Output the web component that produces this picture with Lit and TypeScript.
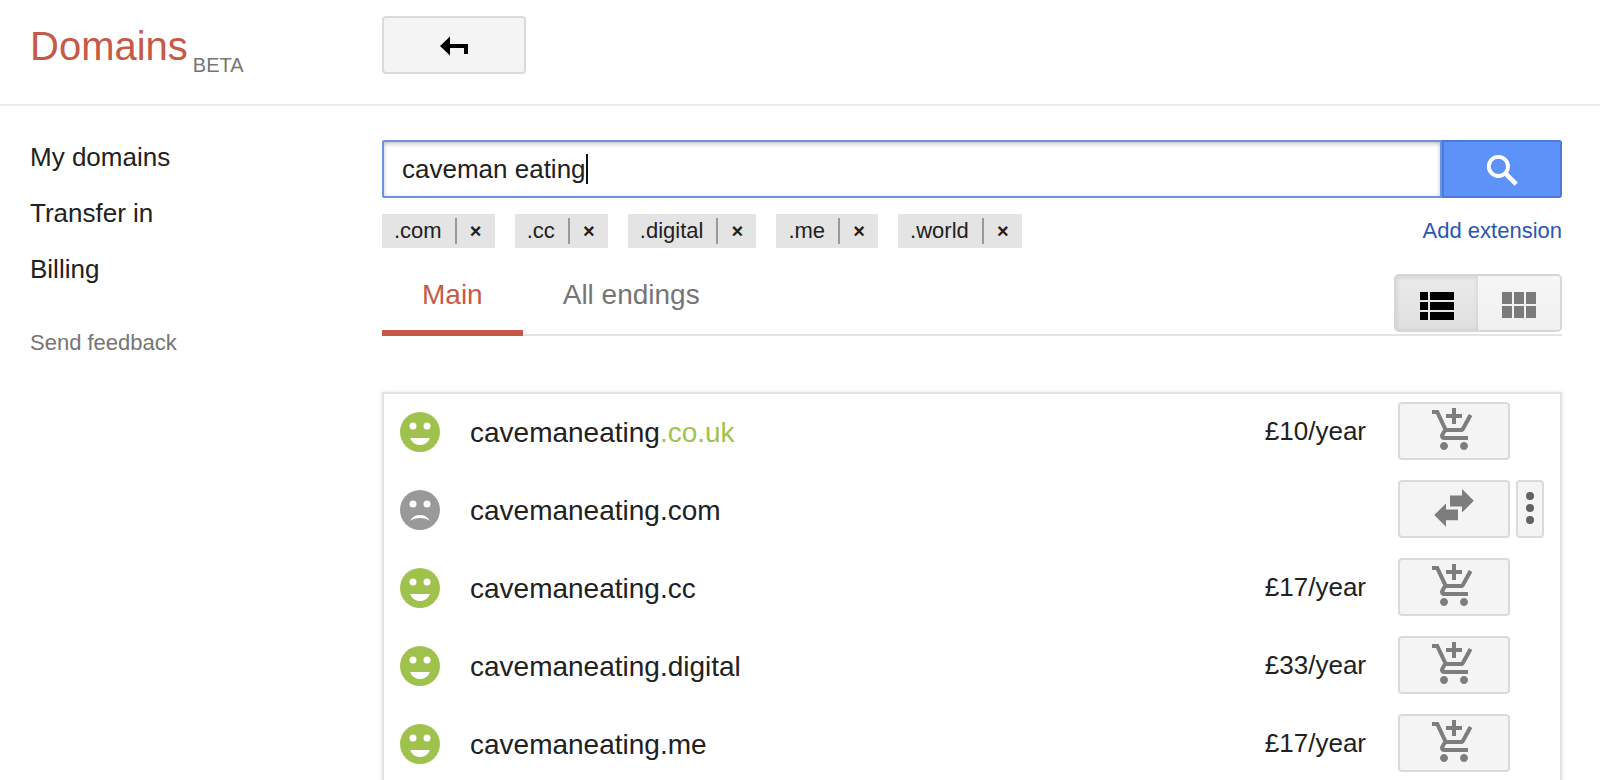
import { LitElement, html, svg, css, nothing } from "lit";
import { customElement, property, state, query } from "lit/decorators.js";
import { classMap } from "lit/directives/class-map.js";
import { styleMap } from "lit/directives/style-map.js";

interface Result {
  name: string;
  ending: string;
  price?: string;
  featured?: boolean;
}

const RESULTS: Result[] = [
  { name: "cavemaneating", ending: ".co.uk", price: "£10/year", featured: true },
  { name: "cavemaneating", ending: ".com" },
  { name: "cavemaneating", ending: ".cc", price: "£17/year" },
  { name: "cavemaneating", ending: ".digital", price: "£33/year" },
  { name: "cavemaneating", ending: ".me", price: "£17/year" },
];

const backIcon = html`<svg width="28" height="20" viewBox="0 0 28 20" aria-hidden="true">
  <path d="M0 10 10 0.5V8H28V18H24V12H10V19.5z" fill="#000" />
</svg>`;

const searchIcon = html`<svg width="36" height="36" viewBox="0 0 36 36" fill="none" stroke="#fff" aria-hidden="true">
  <circle cx="14.4" cy="15.4" r="9.6" stroke-width="3.8" />
  <path d="M21 22 32.2 33.2" stroke-width="4.6" />
</svg>`;

const listIcon = html`<svg width="34" height="28" viewBox="0 0 34 28" aria-hidden="true">
  ${[0, 10, 20].map((y) => svg`<path d="M0 ${y}h8v8h-8zM10 ${y}h24v8h-24z" fill="#000" />`)}
</svg>`;

const gridIcon = html`<svg width="34" height="28" viewBox="0 0 34 28" aria-hidden="true">
  ${[0, 14].map((y) => [0, 12, 24].map((x) => svg`<rect x=${x} y=${y} width="10" height="12" fill="#7b7b7b" />`))}
</svg>`;

const cartIcon = html`<svg width="48" height="48" viewBox="0 0 24 24" fill="#7d7d7d" aria-hidden="true">
  <path
    d="M11 9h2V6h3V4h-3V1h-2v3H8v2h3v3zm-4 9c-1.1 0-1.99.9-1.99 2S5.9 22 7 22s2-.9 2-2-.9-2-2-2zm10 0c-1.1 0-1.99.9-1.99 2s.89 2 1.99 2 2-.9 2-2-.9-2-2-2zm-9.83-3.25l.03-.12.9-1.63h7.45c.75 0 1.41-.41 1.75-1.03l3.86-7.01L19.42 4h-.01l-1.1 2-2.76 5H8.53l-.13-.27L6.16 6l-.95-2-.94-2H1v2h2l3.6 7.59-1.35 2.45c-.16.28-.25.61-.25.96 0 1.1.9 2 2 2h12v-2H7.42c-.13 0-.25-.11-.25-.25z"
  />
</svg>`;

const transferIcon = html`<svg width="48" height="48" viewBox="0 0 48 48" fill="#7d7d7d" aria-hidden="true">
  <path d="M20 11.4H32V5L43.8 16.8 32 28.6V22.4H20z" />
  <path d="M28 25.4H16V19.4L4.2 31 16 42.8V36.2H28z" />
</svg>`;

const moreIcon = html`<svg width="8" height="34" viewBox="0 0 8 34" fill="#636363" aria-hidden="true">
  <circle cx="4" cy="5" r="4" /><circle cx="4" cy="17" r="4" /><circle cx="4" cy="29" r="4" />
</svg>`;

const face = (happy: boolean) => html`<svg
  class="face"
  width="40"
  height="40"
  viewBox="0 0 40 40"
  role="img"
  aria-label=${happy ? "Available" : "Unavailable"}
>
  <circle cx="20" cy="20" r="20" fill=${happy ? "#9fc24d" : "#999"} />
  <circle cx="13" cy="14" r="3.5" fill="#fff" />
  <circle cx="27" cy="14" r="3.5" fill="#fff" />
  ${happy
    ? svg`<path d="M10 26H30C28 30.6 24.6 33 20 33S12 30.6 10 26z" fill="#fff" />`
    : svg`<path d="M10 31C12.4 26.8 16 25 20 25S27.6 26.8 30 31C27 28.8 23.6 28 20 28S13 28.8 10 31z" fill="#fff" />`}
</svg>`;

@customElement("result-row")
class ResultRow extends LitElement {
  @property({ attribute: false }) result!: Result;

  static styles = css`
    :host {
      display: flex;
      align-items: center;
      padding: 8px 16px 12px;
    }
    .face {
      padding-top: 2px;
    }
    .name {
      flex: 1;
      margin-left: 30px;
      padding-top: 4px;
      font-size: 28px;
      line-height: 34px;
    }
    .featured {
      color: #9fc24d;
    }
    .price {
      font-size: 26px;
      line-height: 30px;
    }
    .action,
    .more {
      display: flex;
      align-items: center;
      justify-content: center;
      box-sizing: border-box;
      height: 58px;
      padding: 0 0 2px;
      border: 2px solid #dadada;
      border-radius: 4px;
      background: #f4f4f4;
      cursor: pointer;
    }
    .action {
      width: 112px;
      margin-left: 32px;
    }
    .side {
      display: flex;
      width: 28px;
      margin-left: 6px;
    }
    .more {
      width: 28px;
    }
  `;

  render() {
    const { name, ending, price, featured } = this.result;
    return html`
      ${face(!!price)}
      <span class="name">${name}<span class=${classMap({ featured: !!featured })}>${ending}</span></span>
      ${price ? html`<span class="price">${price}</span>` : nothing}
      <button class="action" aria-label=${price ? "Add to cart" : "Transfer in"}>
        ${price ? cartIcon : transferIcon}
      </button>
      <span class="side">
        ${price ? nothing : html`<button class="more" aria-label="More options">${moreIcon}</button>`}
      </span>
    `;
  }
}

@customElement("app-root")
class AppRoot extends LitElement {
  @state() private term = "caveman eating";
  @state() private caret = 0;
  @state() private endings = [".com", ".cc", ".digital", ".me", ".world"];
  @state() private tab = "Main";
  @query(".field") private field!: HTMLInputElement;

  static styles = css`
    :host {
      display: block;
      height: 100vh;
      overflow-y: auto;
      scrollbar-width: none;
      background: #fff;
      color: #212121;
      font-family: "Liberation Sans", Arial, sans-serif;
    }
    button,
    input {
      font-family: inherit;
      color: inherit;
    }
    button {
      padding: 0;
      cursor: pointer;
    }
    a {
      color: inherit;
      text-decoration: none;
    }
    .top,
    .body {
      display: grid;
      grid-template-columns: 382px minmax(0, 1fr);
    }
    .top {
      padding: 16px 0 28px;
      border-bottom: 2px solid #ebebeb;
    }
    .brand {
      display: flex;
      align-items: flex-end;
      gap: 5px;
      padding-left: 30px;
    }
    .logo {
      margin: 0;
      color: #c65a49;
      font-size: 40px;
      font-weight: 400;
      line-height: 60px;
    }
    .beta {
      color: #757575;
      font-size: 20px;
      line-height: 22px;
    }
    .back {
      display: flex;
      align-items: center;
      justify-content: center;
      box-sizing: border-box;
      width: 144px;
      height: 58px;
      padding-top: 2px;
      border: 2px solid #dadada;
      border-radius: 4px;
      background: #f4f4f4;
    }
    .nav {
      display: flex;
      flex-direction: column;
      align-items: flex-start;
      gap: 26px;
      padding: 36px 0 0 30px;
      font-size: 26px;
      line-height: 30px;
    }
    .feedback {
      margin-top: 18px;
      color: #757575;
      font-size: 22px;
      line-height: 30px;
    }
    .main {
      padding: 34px 38px 0 0;
    }
    .search {
      display: flex;
      height: 58px;
    }
    .box {
      position: relative;
      display: flex;
      flex: 1;
    }
    .field {
      flex: 1;
      box-sizing: border-box;
      min-width: 0;
      padding: 0 18px;
      border: 2px solid #6c93dc;
      border-radius: 2px 0 0 2px;
      outline: none;
      background: #fff;
      box-shadow: inset 0 2px 4px rgba(0, 0, 0, 0.24);
      font-size: 26px;
      caret-color: transparent;
    }
    .caret {
      position: absolute;
      top: 14px;
      width: 2px;
      height: 30px;
      background: #111;
    }
    .go {
      display: flex;
      align-items: center;
      justify-content: center;
      width: 120px;
      border: 2px solid #4a7bdb;
      border-radius: 0 3px 3px 0;
      background: #5d92f8;
    }
    .filters {
      display: flex;
      justify-content: space-between;
      margin-top: 16px;
      font-size: 22px;
      line-height: 34px;
    }
    .chips {
      display: flex;
      gap: 20px;
      margin: 0;
      padding: 0;
      list-style: none;
    }
    .chip {
      display: flex;
      height: 34px;
      padding-left: 12px;
      background: #e4e4e4;
    }
    .remove {
      width: 40px;
      height: 26px;
      margin: 4px 0 4px 13px;
      border: 0;
      border-left: 2px solid #999;
      background: none;
      font-size: 20px;
      font-weight: 700;
      line-height: 24px;
    }
    .add {
      color: #2a56b0;
    }
    .tabs {
      display: flex;
      align-items: flex-start;
      margin-top: 26px;
      border-bottom: 2px solid #e4e4e4;
    }
    .tab {
      margin-bottom: -2px;
      padding: 0 40px 14px;
      border: 0;
      border-bottom: 6px solid transparent;
      background: none;
      color: #757575;
      font-size: 28px;
      line-height: 42px;
    }
    .tab.active {
      border-color: #c85645;
      color: #c65a49;
    }
    .views {
      display: flex;
      box-sizing: border-box;
      width: 168px;
      height: 58px;
      margin-left: auto;
      overflow: hidden;
      border: 2px solid #d6d6d6;
      border-radius: 5px;
    }
    .view {
      display: flex;
      flex: 1;
      align-items: center;
      justify-content: center;
      padding-top: 6px;
      border: 0;
      background: linear-gradient(#f6f6f6, #f0f0f0);
    }
    .view.on {
      background: linear-gradient(#eaeaea, #e0e0e0);
      box-shadow: inset 0 1px 5px rgba(0, 0, 0, 0.12);
    }
    .results {
      margin: 56px 0 0;
      padding: 0;
      border: 2px solid #e2e2e2;
      box-shadow: 0 0 4px rgba(0, 0, 0, 0.1);
      list-style: none;
    }
  `;

  firstUpdated() {
    this.placeCaret();
  }

  private placeCaret() {
    const style = getComputedStyle(this.field);
    const ctx = document.createElement("canvas").getContext("2d")!;
    ctx.font = `${style.fontSize} ${style.fontFamily}`;
    const before = this.field.value.slice(0, this.field.selectionEnd ?? undefined) || this.term;
    this.caret = 20 + Math.round(ctx.measureText(before).width);
  }

  private onInput(e: InputEvent) {
    this.term = (e.target as HTMLInputElement).value;
    this.placeCaret();
  }

  private removeEnding(ending: string) {
    this.endings = this.endings.filter((x) => x !== ending);
  }

  render() {
    return html`
      <header class="top">
        <div class="brand">
          <h1 class="logo">Domains</h1>
          <span class="beta">BETA</span>
        </div>
        <button class="back" aria-label="Back">${backIcon}</button>
      </header>
      <div class="body">
        <nav class="nav">
          <a href="#domains">My domains</a>
          <a href="#transfer">Transfer in</a>
          <a href="#billing">Billing</a>
          <a class="feedback" href="#feedback">Send feedback</a>
        </nav>
        <main class="main">
          <div class="search" role="search">
            <div class="box">
              <input
                class="field"
                type="text"
                aria-label="Search domains"
                spellcheck="false"
                .value=${this.term}
                @input=${this.onInput}
              />
              <span class="caret" style=${styleMap({ left: `${this.caret}px` })}></span>
            </div>
            <button class="go" aria-label="Search">${searchIcon}</button>
          </div>
          <div class="filters">
            <ul class="chips">
              ${this.endings.map(
                (ending) => html`<li class="chip">
                  <span>${ending}</span>
                  <button class="remove" aria-label="Remove ${ending}" @click=${() => this.removeEnding(ending)}>×</button>
                </li>`
              )}
            </ul>
            <a class="add" href="#extensions">Add extension</a>
          </div>
          <div class="tabs">
            ${["Main", "All endings"].map(
              (label) => html`<button
                class=${classMap({ tab: true, active: this.tab === label })}
                @click=${() => (this.tab = label)}
              >${label}</button>`
            )}
            <div class="views">
              <button class="view on" aria-label="List view" aria-pressed="true">${listIcon}</button>
              <button class="view" aria-label="Grid view" aria-pressed="false">${gridIcon}</button>
            </div>
          </div>
          <ul class="results">
            ${RESULTS.map((result) => html`<li><result-row .result=${result}></result-row></li>`)}
          </ul>
        </main>
      </div>
    `;
  }
}
